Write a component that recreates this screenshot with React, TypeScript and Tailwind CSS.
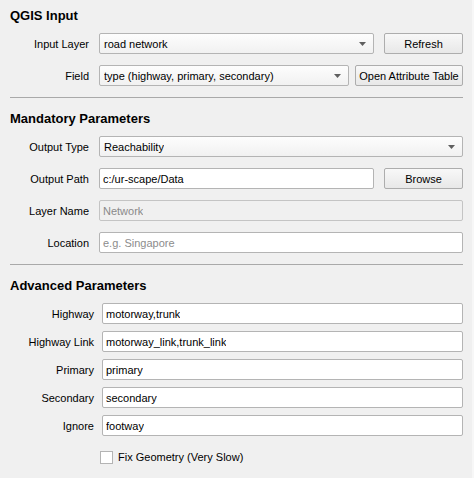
const font = { fontFamily: '"Liberation Sans", Arial, sans-serif' };

function Arrow() {
  return (
    <svg width="7" height="4" viewBox="0 0 7 4" className="shrink-0">
      <path d="M0 0 H7 L3.5 4 Z" fill="#5f5f5f" />
    </svg>
  );
}

function Combo({ value, className = "" }: { value: string; className?: string }) {
  return (
    <div
      className={`flex h-[21px] items-center justify-between rounded-[2px] border border-[#b4b4b4] bg-gradient-to-b from-[#fdfdfd] to-[#f1f1f1] pl-[4px] pr-[7px] ${className}`}
    >
      <span className="truncate">{value}</span>
      <Arrow />
    </div>
  );
}

function Field({
  value,
  placeholder,
  disabled,
  className = "",
}: {
  value?: string;
  placeholder?: string;
  disabled?: boolean;
  className?: string;
}) {
  return (
    <div
      className={`flex h-[21px] items-center rounded-[2px] border pl-[3px] ${
        disabled ? "border-[#c4c4c4] bg-[#f0f0f0] text-[#8a8a8a]" : "border-[#b4b4b4] bg-white"
      } ${className}`}
    >
      {value ? <span className="truncate">{value}</span> : <span className="text-[#8c8c8c]">{placeholder}</span>}
    </div>
  );
}

function Button({ label, className = "" }: { label: string; className?: string }) {
  return (
    <div
      className={`flex h-[21px] items-center justify-center whitespace-nowrap rounded-[2px] border border-[#adadad] bg-gradient-to-b from-[#f8f8f8] to-[#e8e8e8] ${className}`}
    >
      {label}
    </div>
  );
}

function Row({ label, children, labelW = "w-[79px]", gap = "gap-[10px]" }: { label: string; children: React.ReactNode; labelW?: string; gap?: string }) {
  return (
    <div className={`flex items-center ${gap}`}>
      <div className={`${labelW} shrink-0 text-right`}>{label}</div>
      <div className="flex flex-1 items-center">{children}</div>
    </div>
  );
}

export default function App() {
  return (
    <div
      className="relative h-[478px] w-[474px] overflow-hidden bg-[#f0f0f0] text-[11px] leading-[14px] text-black"
      style={font}
    >
      <div className="absolute right-0 top-0 h-full w-[2px] bg-[#f7f7f7]" />
      <div className="flex flex-col pl-[10px] pr-[11px]">
        {/* QGIS Input */}
        <h2 className="mt-[8px] text-[13px] font-bold leading-[16px]">QGIS Input</h2>
        <div className="mt-[9px] flex flex-col gap-[11px]">
          <Row label="Input Layer">
            <Combo value="road network" className="w-[275px]" />
            <Button label="Refresh" className="ml-[10px] flex-1" />
          </Row>
          <Row label="Field">
            <Combo value="type (highway, primary, secondary)" className="w-[250px]" />
            <Button label="Open Attribute Table" className="ml-[6px] flex-1" />
          </Row>
        </div>
        <div className="mt-[11px] h-px bg-[#a9a9a9]" />

        {/* Mandatory */}
        <h2 className="mt-[13px] text-[13px] font-bold leading-[16px]">Mandatory Parameters</h2>
        <div className="mt-[9px] flex flex-col gap-[11px]">
          <Row label="Output Type">
            <Combo value="Reachability" className="flex-1" />
          </Row>
          <Row label="Output Path">
            <Field value="c:/ur-scape/Data" className="w-[275px]" />
            <Button label="Browse" className="ml-[10px] flex-1" />
          </Row>
          <Row label="Layer Name">
            <Field value="Network" disabled className="flex-1" />
          </Row>
          <Row label="Location">
            <Field placeholder="e.g. Singapore" className="flex-1" />
          </Row>
        </div>
        <div className="mt-[11px] h-px bg-[#a9a9a9]" />

        {/* Advanced */}
        <h2 className="mt-[13px] text-[13px] font-bold leading-[16px]">Advanced Parameters</h2>
        <div className="mt-[9px] flex flex-col gap-[7px]">
          {[
            ["Highway", "motorway,trunk"],
            ["Highway Link", "motorway_link,trunk_link"],
            ["Primary", "primary"],
            ["Secondary", "secondary"],
            ["Ignore", "footway"],
          ].map(([l, v]) => (
            <Row key={l} label={l} labelW="w-[84px]" gap="gap-[8px]">
              <Field value={v} className="flex-1" />
            </Row>
          ))}
        </div>
        <div className="ml-[90px] mt-[14px] flex items-center gap-[5px]">
          <div className="h-[13px] w-[13px] border border-[#b4b4b4] bg-white" />
          <span>Fix Geometry (Very Slow)</span>
        </div>
      </div>
    </div>
  );
}
